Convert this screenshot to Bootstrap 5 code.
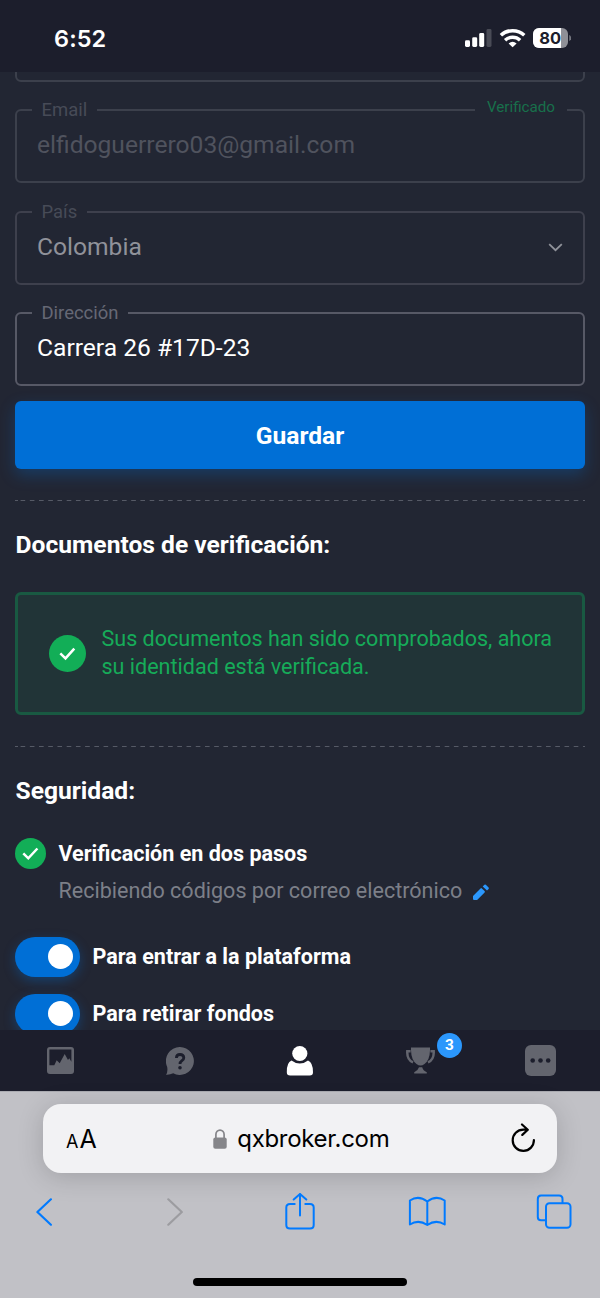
<!DOCTYPE html>
<html lang="es">
<head>
<meta charset="utf-8">
<meta name="viewport" content="width=device-width, initial-scale=1">
<title>Cuenta</title>
<link href="https://cdn.jsdelivr.net/npm/bootstrap@5.3.0/dist/css/bootstrap.min.css" rel="stylesheet">
<style>
body{font-family:Roboto,"Liberation Sans",sans-serif;background:#222633;color:#fff;height:1298px;overflow:hidden;line-height:1.2}
svg{display:block;flex:none}
.ui-font{font-family:Inter,"Liberation Sans",sans-serif}
.statusbar{height:72px;background:#1c1e2c;padding:5px 29px 0 54px;flex:none}
.clock{font-size:23.5px;font-weight:600;letter-spacing:.1px;padding-top:1px}
.page-main{height:958px;padding:0 15px;background:#222633;flex:none}
.fieldbox{height:84px;flex:none;border:2px solid #3c404c;border-radius:6px;padding:0 20px;margin:0 0 18px}
.fieldbox legend{float:none;width:auto;margin:0 0 0 -5px;padding:0 10px 0 9.5px;font-size:18.46px;line-height:22px;height:22px;color:#474b57}
.field-first{height:74px;margin-top:-64px;margin-bottom:17px}
.field-country{border-color:#3e404d;margin-bottom:17px}
.field-address{border-color:#575966;margin-bottom:15px}
.field-address legend{color:#666875}
.fieldvalue{font-size:24.6px;line-height:30px;margin-top:9px}
.value-muted{color:#50535e}
.value-readonly{color:#90929a}
.note{position:absolute;right:18px;top:-2px;background:#222633;padding:0 12px;font-size:15.2px;line-height:20px;color:#18704b}
.save{height:68px;border-radius:6px;background:#006fd6;font-size:24.6px;font-weight:700;box-shadow:0 6px 16px rgba(0,111,214,.3);color:#fff;padding:2px 0 0;border:0}
.dashes{height:1px;margin-top:31px;background:linear-gradient(#565a66,#565a66) 0 0/3px 100% no-repeat,linear-gradient(90deg,#565a66 0 4.8px,transparent 4.8px) 5.6px 0/9.23px 100%;flex:none}
.heading{font-size:24.6px;font-weight:700;line-height:30px;margin:29px 0 0 .6px}
.verified{height:123px;margin-top:32px;border:3px solid #195942;border-radius:6px;background:#213437;color:#16ab59;font-size:21.54px;line-height:27.7px;padding:0 20px 0 31px}
.verified-text{margin:-2px 0 0 15.5px}
.option{font-size:21.54px;font-weight:700;line-height:26px;margin-left:12.5px}
.two-step{margin-top:32px}
.soft{color:#7c7f88;font-size:21.54px;line-height:26px;padding-left:43.5px;margin-top:9px}
.pencil{margin:2px 0 0 11px}
.switch-one{margin-top:32.5px}
.switch-two{margin-top:17px}
.toggle{width:65px;height:40px;border-radius:20px;background:#006fd6;padding-right:7.5px;box-shadow:0 4px 12px rgba(0,111,214,.35)}
.knob{width:25px;height:25px;border-radius:50%;background:#fff}
.tabs{height:61px;background:#1c1e2c;flex:none}
.tabs>div{width:120px}
.count{position:absolute;left:77px;top:-28px;width:25px;height:25px;border-radius:50%;background:#2b97fc;font-size:15.4px;font-weight:700}
.browser{height:207px;background:#c1c1c6;padding-top:12px;border-top:1px solid #aaabb1;flex:none}
.addressbar{height:69px;margin:0 43px;border-radius:18px;background:#f2f2f4;color:#000;box-shadow:0 4px 26px rgba(0,0,0,.17);padding:0 21px 0 23px}
.small-a{font-size:18px}
.large-a{font-size:25px;margin-left:1px}
.url{font-size:24px;letter-spacing:-.3px;margin-left:10px}
.site{margin-right:4px}
.addr-text{padding-top:1px}
.tools{height:76px;margin-top:1px;padding:0 27px 0 27px}
.home-bar{width:214px;height:8px;border-radius:4px;background:#000;margin:28px auto 0}
</style>
</head>
<body class="d-flex flex-column">
<header class="statusbar ui-font d-flex align-items-center justify-content-between">
  <div class="clock">6:52</div>
  <svg width="110" height="22" viewBox="0 0 110 22">
    <g transform="translate(4 0)" fill="#fff">
      <rect x="0" y="12.3" width="5" height="6.7" rx="1.4"/><rect x="7.2" y="9.3" width="5" height="9.7" rx="1.4"/><rect x="14.2" y="5" width="5" height="14" rx="1.4"/><rect x="21.5" y="1" width="5" height="18" rx="1.4" fill="#494b56"/>
    </g>
    <g fill="none" stroke="#fff" stroke-width="3.5">
      <path d="M39.9 7.3a17.2 17.2 0 0 1 23.4 0"/><path d="M44.1 12.2a11 11 0 0 1 15 0"/>
    </g>
    <path d="M47.6 15.4q4-3.2 8 0l-4 3.9z" fill="#fff"/>
    <rect x="72" y="0" width="35" height="20" rx="6" fill="#8f9097"/>
    <path d="M78 0H100V20H78a6 6 0 0 1-6-6V6a6 6 0 0 1 6-6z" fill="#fff"/>
    <path d="M108.2 7q2 1 2 3t-2 3z" fill="#73757e"/>
    <text x="89.3" y="16" text-anchor="middle" font-size="16.5" font-weight="700" fill="#1c1e2c">80</text>
  </svg>
</header>

<main class="page-main d-flex flex-column overflow-hidden">
  <div class="fieldbox field-first"></div>
  <div class="position-relative">
    <fieldset class="fieldbox"><legend>Email</legend><div class="fieldvalue value-muted">elfidoguerrero03@gmail.com</div></fieldset>
    <span class="note">Verificado</span>
  </div>
  <fieldset class="fieldbox field-country"><legend>País</legend>
    <div class="fieldvalue value-readonly d-flex justify-content-between align-items-center"><span>Colombia</span>
      <svg width="15" height="9" viewBox="0 0 16 10" fill="none" stroke="#90929a" stroke-width="2"><path d="M1 1.3 8 8l7-6.7"/></svg></div>
  </fieldset>
  <fieldset class="fieldbox field-address"><legend>Dirección</legend><div class="fieldvalue">Carrera 26 #17D-23</div></fieldset>
  <button class="btn save w-100 flex-shrink-0">Guardar</button>
  <div class="dashes"></div>
  <h2 class="heading">Documentos de verificación:</h2>
  <div class="verified d-flex align-items-center flex-shrink-0">
    <svg width="37" height="37" viewBox="0 0 37 37"><circle cx="18.5" cy="18.5" r="18.5" fill="#12ae57"/><path d="M11.3 18.4l5.2 5 8.8-9.8" fill="none" stroke="#fff" stroke-width="2.5"/></svg>
    <div class="verified-text">Sus documentos han sido comprobados, ahora<br>su identidad está verificada.</div>
  </div>
  <div class="dashes"></div>
  <h2 class="heading">Seguridad:</h2>
  <div class="two-step d-flex align-items-center">
    <svg width="31" height="31" viewBox="0 0 31 31"><circle cx="15.5" cy="15.5" r="15.5" fill="#12ae57"/><path d="M8.3 15.3l5 5 9.1-9.8" fill="none" stroke="#fff" stroke-width="2.5"/></svg>
    <span class="option">Verificación en dos pasos</span>
  </div>
  <div class="soft d-flex align-items-center">
    <span>Recibiendo códigos por correo electrónico</span>
    <svg class="pencil" width="17" height="17" viewBox="0 0 17 17" fill="#2b97fc"><path d="M.8 16.1 0 15.3V11.9L7.5 4.4Q8.2 3.8 8.9 4.4L11.6 7.1Q12.3 7.8 11.6 8.5L4.1 16.1z"/><path d="M9.7 2.5 11.4.8Q12.1.1 12.8.8L15.6 3.6Q16.2 4.2 15.6 4.9L14 6.6z"/></svg>
  </div>
  <div class="switch-one d-flex align-items-center">
    <div class="toggle d-flex align-items-center justify-content-end"><div class="knob"></div></div><span class="option">Para entrar a la plataforma</span>
  </div>
  <div class="switch-two d-flex align-items-center">
    <div class="toggle d-flex align-items-center justify-content-end"><div class="knob"></div></div><span class="option">Para retirar fondos</span>
  </div>
</main>

<nav class="tabs d-flex">
  <div class="d-flex align-items-center justify-content-center">
    <svg width="27" height="27" viewBox="0 0 27 27"><rect width="27" height="27" rx="3" fill="#63656e"/><path d="M2.4 2.4H24.4V14.7L22.3 11.3 21 13 17.7 7 12.7 16.3 9.7 13.3 7.3 18.3H2.4z" fill="#1c1e2c"/></svg>
  </div>
  <div class="d-flex align-items-center justify-content-center">
    <svg width="28" height="28" viewBox="0 0 28 28"><path d="M14 0A14 14 0 1 1 7.2 26.3Q3.8 28 0 27.7 2 25 1.2 20A14 14 0 0 1 14 0z" fill="#63656e"/><path d="M10.4 10.9Q10.4 7.5 14 7.5T17.8 10.7C17.8 14 14 13.4 14 17" fill="none" stroke="#1c1e2c" stroke-width="2.8"/><circle cx="14" cy="20.8" r="1.8" fill="#1c1e2c"/></svg>
  </div>
  <div class="d-flex align-items-center justify-content-center">
    <svg width="28" height="31" viewBox="0 0 28 31" fill="#fff"><circle cx="13.8" cy="8.5" r="7.6"/><path d="M5.5 15.5Q9 18.4 13.8 18.4T22 15.5Q27 17.5 27 27.2 27 30.5 23.7 30.5H4.1Q.8 30.5.8 27.2.6 17.5 5.5 15.5z"/></svg>
  </div>
  <div class="d-flex align-items-center justify-content-center position-relative">
    <svg width="29" height="27" viewBox="0 0 29 27"><g fill="#63656e"><path d="M5 .4H24V3Q23.8 13 18.5 17 14.5 20 10.5 17 5.2 13 5 3z"/><path d="M13 20.2h3.2Q17 23.5 20.8 25.3V26.6H8.2V25.3Q12 23.5 13 20.2z"/></g><path d="M4.6 4.3H1.3Q.8 12.8 7 15.4M24.4 4.3h3.3Q28.2 12.8 22 15.4" fill="none" stroke="#63656e" stroke-width="2.5"/></svg>
    <div class="position-absolute top-50 start-0"><span class="count d-flex align-items-center justify-content-center">3</span></div>
  </div>
  <div class="d-flex align-items-center justify-content-center">
    <svg width="31" height="31" viewBox="0 0 31 31"><rect width="31" height="31" rx="6" fill="#63656e"/><g fill="#1c1e2c"><circle cx="7.7" cy="15.5" r="2.3"/><circle cx="15.5" cy="15.5" r="2.3"/><circle cx="23.2" cy="15.5" r="2.3"/></g></svg>
  </div>
</nav>

<footer class="browser ui-font">
  <div class="addressbar d-flex align-items-center justify-content-between">
    <div class="addr-text d-flex align-items-baseline"><span class="small-a">A</span><span class="large-a">A</span></div>
    <div class="site addr-text d-flex align-items-center">
      <svg width="14" height="20" viewBox="0 0 14 20"><rect x=".3" y="8.5" width="13.4" height="11.2" rx="2" fill="#858589"/><path d="M2.9 9V5.6a4.1 4.5 0 0 1 8.2 0V9" fill="none" stroke="#858589" stroke-width="1.7"/></svg>
      <span class="url">qxbroker.com</span>
    </div>
    <svg width="26" height="32" viewBox="0 0 26 32" fill="none" stroke="#000" stroke-width="2.2" stroke-linecap="round" stroke-linejoin="round"><path d="M17.5 6.7H13.3A10.6 10.6 0 1 0 23.9 17M12 1.5l5.8 5.2-5.5 5.2" /></svg>
  </div>
  <nav class="tools d-flex align-items-center justify-content-between">
    <svg width="38" height="28" viewBox="0 0 38 28" fill="none" stroke="#007aff" stroke-width="2.2" stroke-linecap="round" stroke-linejoin="round"><path d="M23.9 1.3 10.4 14 23.9 26.7"/></svg>
    <svg width="38" height="28" viewBox="0 0 38 28" fill="none" stroke="#9c9ca0" stroke-width="2.2" stroke-linecap="round" stroke-linejoin="round"><path d="M14.3 1.3 27.8 14 14.3 26.7"/></svg>
    <svg width="38" height="38" viewBox="-4 0 38 38" fill="none" stroke="#007aff" stroke-width="2" stroke-linecap="round" stroke-linejoin="round"><path d="M9.7 11H5Q1.3 11 1.3 14.5V32Q1.3 35.5 5 35.5H25Q28.7 35.5 28.7 32V14.5Q28.7 11 25 11H20.3M15 22.5V.9M8.7 6.5 15 1 21.3 6.5"/></svg>
    <svg width="38" height="32" viewBox="0 0 38 32" fill="none" stroke="#007aff" stroke-width="2" stroke-linecap="round" stroke-linejoin="round"><path d="M19.3 5.5Q10.5-1.2 1.9 4.5V28.5Q10.5 23 19.3 29 28 23 36.7 28.5V4.5Q28-1.2 19.3 5.5V29"/></svg>
    <svg width="38" height="36" viewBox="-1 0 38 36" fill="none" stroke="#007aff" stroke-width="2"><rect x="10" y="9.3" width="24.5" height="24.5" rx="3.5"/><path d="M10 26.3H5Q1.8 26.3 1.8 23V5Q1.8 1.5 5 1.5H23Q26.5 1.5 26.5 5V9.3"/></svg>
  </nav>
  <div class="home-bar"></div>
</footer>
<script src="https://cdn.jsdelivr.net/npm/bootstrap@5.3.0/dist/js/bootstrap.bundle.min.js"></script>
</body>
</html>
